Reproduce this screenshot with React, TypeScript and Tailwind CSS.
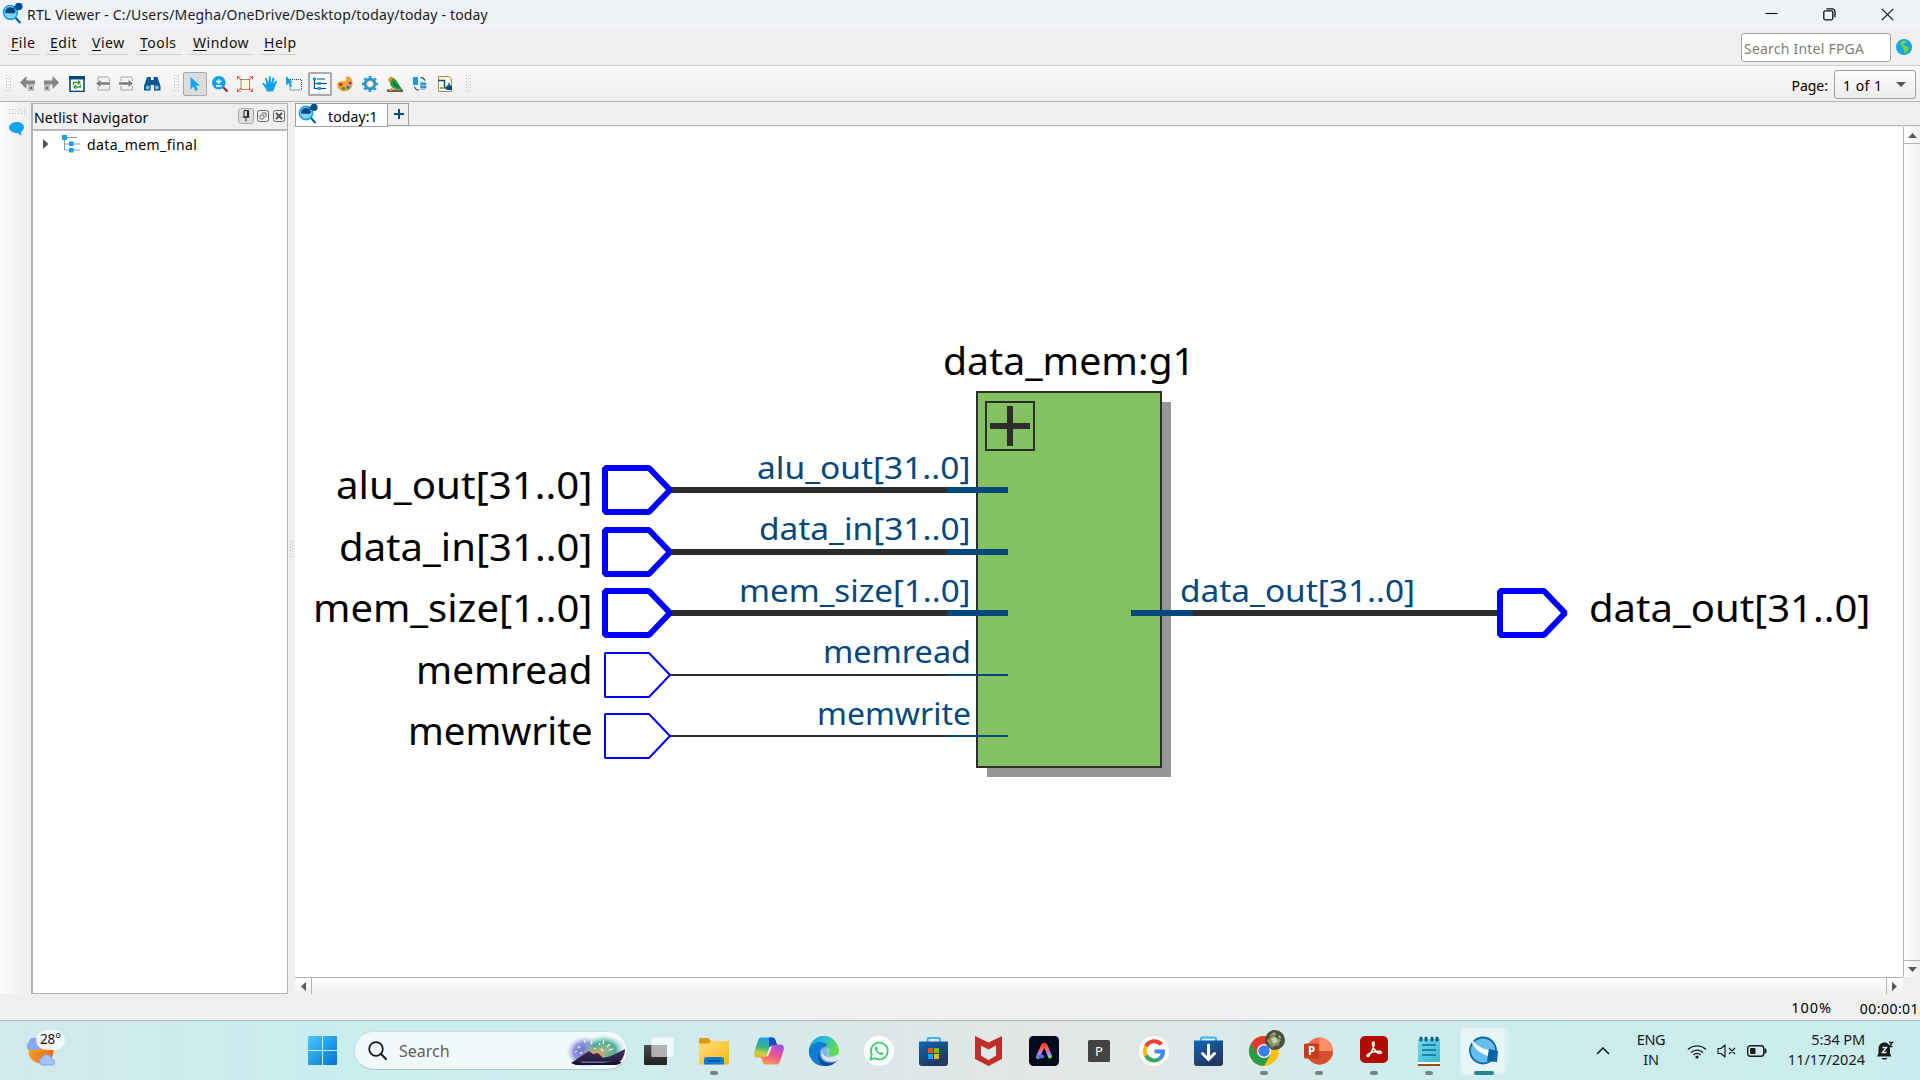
import React from "react";

type IconProps = { children: React.ReactNode; w?: number; h?: number; vb?: string; className?: string };

function Svg({ children, w = 16, h = 16, vb, className = "" }: IconProps) {
  return (
    <svg width={w} height={h} viewBox={vb ?? `0 0 ${w} ${h}`} fill="none" className={`block shrink-0 ${className}`}>
      {children}
    </svg>
  );
}

function ViewerLogo({ size = 20 }: { size?: number }) {
  return (
    <Svg w={size} h={size} vb="0 0 20 20">
      <path d="M12.5 13.5L17 18.5" stroke="#0b5a94" strokeWidth="2" strokeLinecap="round" />
      <circle cx="8" cy="9" r="6.600" fill="#7fd3f7" stroke="#1ba1e2" strokeWidth="1.600" />
      <path d="M3 9.500a5 5 0 0 1 10-1l-1.500 1.500z" fill="#04457f" />
      <circle cx="16" cy="3.300" r="3.600" fill="#04508f" />
      <path d="M11 3h4v2l-3 1z" fill="#04508f" />
    </Svg>
  );
}

function Grip({ vertical = false }: { vertical?: boolean }) {
  return vertical ? (
    <Svg w={17} h={5}>
      <path d="M0 .5h17M0 4.500h17" stroke="#b4b4b4" strokeDasharray="1 2" />
      <path d="M1 2.500h17" stroke="#d4d4d4" strokeDasharray="1 2" />
    </Svg>
  ) : (
    <Svg w={5} h={17}>
      <path d="M.5 0v17M4.500 0v17" stroke="#b4b4b4" strokeDasharray="1 2" />
      <path d="M2.500 1v17" stroke="#d4d4d4" strokeDasharray="1 2" />
    </Svg>
  );
}

const menus: [string, string, string][] = [
  ["F", "ile", "w-[32px]"],
  ["E", "dit", "w-[35px]"],
  ["V", "iew", "w-[41px]"],
  ["T", "ools", "w-[46px]"],
  ["W", "indow", "w-[64px]"],
  ["H", "elp", "w-[36px]"],
];

function TitleBar() {
  return (
    <header className="flex h-[29px] shrink-0 items-start bg-[#eff3f7]">
      <div className="ml-[2px] mt-[3px]"><ViewerLogo size={21} /></div>
      <span className="ml-[4px] mt-[5px] text-[14px] leading-[19px] tracking-[0.168px] text-[#1b1b1b]">
        RTL Viewer - C:/Users/Megha/OneDrive/Desktop/today/today - today
      </span>
      <div className="ml-auto mt-[8px] mr-[26px] flex gap-[45px]">
        <Svg w={13} h={13}><path d="M0.500 5.500h12" stroke="#111" strokeWidth="1.100" /></Svg>
        <Svg w={13} h={13}>
          <rect x=".8" y="2.800" width="9" height="9" rx="1.500" stroke="#111" strokeWidth="1.300" />
          <path d="M3.500 .8h5.500a3 3 0 0 1 3 3v5.500" stroke="#111" strokeWidth="1.300" />
        </Svg>
        <Svg w={13} h={13}><path d="M.8.8l11.400 11.400M12.200.8L.8 12.200" stroke="#111" strokeWidth="1.200" /></Svg>
      </div>
    </header>
  );
}

function MenuBar() {
  return (
    <nav className="flex h-[37px] shrink-0 items-start border-b border-[#d2d2d2] bg-[#efefef] pl-[7px]">
      <div className="flex gap-[7px]">
        {menus.map(([k, rest, w]) => (
          <div key={k} className={`h-[26px] whitespace-nowrap border-b border-[#d0d0d0] pl-[4px] pt-[4px] text-[14px] leading-[20px] tracking-[0.500px] text-[#111] ${w}`}>
            <span className="underline decoration-1 underline-offset-2">{k}</span>{rest}
          </div>
        ))}
      </div>
      <div className="ml-auto mt-[4px] flex h-[29px] w-[150px] items-center rounded-[3px] border border-[#a4a4a4] bg-white pl-[2px] pt-px text-[14px] tracking-[0.220px] text-[#7c7c7c]">
        Search Intel FPGA
      </div>
      <Svg w={16} h={16} className="ml-[5px] mr-[8px] mt-[10px]">
        <circle cx="8" cy="8" r="8" fill="#10a5ee" />
        <path d="M4 4.500Q5 1.500 9.500 1.500L11 3 8 4.500 7 6.500 9.500 7l3.500 1.500L12 11.500 9.500 14.500 8.500 15l-.5-4.500L6.500 8.500 5 6z" fill="#7ed02f" />
      </Svg>
    </nav>
  );
}

const arrowLeft = "M0 6.500L6.500 0v4.500H15v4H6.500V13z";

function ToolBar() {
  return (
    <div className="flex h-[36px] shrink-0 items-center border-b border-[#b4b4b4] bg-gradient-to-b from-[#fafafa] to-[#eeeeee]">
      <div className="ml-[6px]"><Grip /></div>
      <Svg w={16} h={16} className="ml-[9px]">
        <path d={arrowLeft} fill="#858585" />
        <path d="M8 8h6v7H8z" fill="#b9b9b9" /><path d="M10 11h2v2h-2z" fill="#666" />
      </Svg>
      <Svg w={16} h={16} className="ml-[7px]">
        <path d={arrowLeft} fill="#858585" transform="matrix(-1 0 0 1 16 0)" />
        <path d="M1 8h6v7H1z" fill="#b9b9b9" /><path d="M3 11h2v2H3z" fill="#666" />
      </Svg>
      <Svg w={16} h={16} className="ml-[10px]">
        <rect x="1" y="1" width="14" height="14.500" fill="#fff" stroke="#04487c" strokeWidth="1.600" />
        <path d="M0 0h16v3.500H0z" fill="#04487c" />
        <path d="M4.500 9V6.500H11M9 4.500l2 2-2 2M11.500 8.500V11H5M7 9l-2 2 2 2" stroke="#3f9a3a" strokeWidth="1.300" />
      </Svg>
      <Svg w={16} h={16} className="ml-[11px]">
        <path d="M2 5V1h10l1.500 1.500V5M2 10v4h11.500v-4" stroke="#a4a4a4" />
        <path d="M0 7.500L4.500 4v2.200H14v2.500H4.500V11z" fill="#7c7c7c" />
      </Svg>
      <Svg w={16} h={16} className="ml-[7px]">
        <path d="M2 5V1h10l1.500 1.500V5M2 10v4h11.500v-4" stroke="#a4a4a4" />
        <path d="M14 7.500L9.500 4v2.200H0v2.500h9.500V11z" fill="#7c7c7c" />
      </Svg>
      <Svg w={17} h={16} className="ml-[9px]">
        <path d="M3 1h4v3h2.500V1h4l3 9v4.500H10V9H6.500v5.500H0V10z" fill="#075b94" />
        <circle cx="3.700" cy="11.500" r="2.500" fill="#6ec1ea" stroke="#075b94" /><circle cx="12.800" cy="11.500" r="2.500" fill="#6ec1ea" stroke="#075b94" />
      </Svg>
      <div className="ml-[13px]"><Grip /></div>
      <div className="ml-[4px] flex h-[24px] w-[24px] items-center justify-center rounded-[2px] border border-[#a8a8a8] bg-[#dcdcdc]">
        <Svg w={12} h={16}><path d="M1.500 1v12.500l3-3 2 4.500 2.500-1-2-4.500H11z" fill="#0ea5f2" /></Svg>
      </div>
      <Svg w={17} h={16} className="ml-[5px]">
        <path d="M11 11l4.500 4.500" stroke="#b01e1e" strokeWidth="2.200" />
        <circle cx="6.800" cy="6.800" r="6.800" fill="#109fe8" />
        <path d="M4 5.500h5.500M6.800 3v5M4 10h5.500" stroke="#fff" strokeWidth="1.300" />
      </Svg>
      <Svg w={16} h={16} className="ml-[8px]">
        <rect x="4" y="3.500" width="8.500" height="10" fill="#fdf6dc" stroke="#a08b6a" />
        <path d="M0 4V0h4M12 0h4v4M16 12v4h-4M4 16H0v-4" stroke="#ee2c2c" strokeWidth="1.200" /><path d="M0 0l4 4M16 0l-4 4M16 16l-4-4M0 16l4-4" stroke="#ee2c2c" />
      </Svg>
      <Svg w={16} h={16} className="ml-[9px]">
        <path d="M5 15.500L3.500 12 0 7.500l1.300-.8L4.500 9 3 2l1.500-.3L6.300 7 7 .3h1.500L9 7l1.800-5.700 1.500.4L11.500 8l2.500-3.500 1.300.8-2.800 6.700-1.500 3.500z" fill="#12a2ea" />
      </Svg>
      <Svg w={17} h={16} className="ml-[8px]">
        <path d="M4 3.500h11.500v10.500H4z" stroke="#04487c" strokeDasharray="1 1" />
        <path d="M0 0v9.500l2.500-2.200L4 11l2-.8-1.500-3.700H7z" fill="#12a2ea" />
      </Svg>
      <div className="ml-[5px] flex h-[24px] w-[24px] items-center justify-center rounded-[2px] border-2 border-[#ababab] bg-[#f5f5f5]">
        <Svg w={16} h={16}>
          <path d="M0 0h16v16H0z" fill="#fff" />
          <path d="M2.500 3v9.500H6M2.500 7.500H6M5 3h8M9 7.500h6M9 12.500h5" stroke="#04487c" strokeWidth="1.200" />
          <path d="M1 1.500h3v3H1zM5.500 6h3.500v3H5.500zM5.500 11h3.500v3H5.500z" fill="#12a2ea" />
        </Svg>
      </div>
      <Svg w={16} h={16} className="ml-[5px]">
        <path d="M11.500.5c3 1 4.500 4.500 4 8-.6 4-4 6.800-8 6.800C3 15.300 0 12 .2 9 .5 6 3 4.600 6 5.500 8.500 6 9 4.500 9 2.500 9 1 10 0 11.500.5z" fill="#f5a52a" />
        <circle cx="3.700" cy="8.600" r="1.800" fill="#d82840" /><circle cx="6.500" cy="12.500" r="1.700" fill="#3a9b3a" /><circle cx="11" cy="11.500" r="1.800" fill="#168bd8" /><circle cx="13" cy="7" r="1.500" fill="#7b3bb4" />
      </Svg>
      <Svg w={16} h={16} className="ml-[9px]">
        <circle cx="8" cy="8" r="4.700" stroke="#1698dd" strokeWidth="3" fill="#f4f4f4" />
        <circle cx="8" cy="8" r="7" stroke="#1698dd" strokeWidth="2" strokeDasharray="2.750 2.750" strokeDashoffset="1.400" />
        <circle cx="8" cy="8" r="3.500" stroke="#b5a36d" />
      </Svg>
      <Svg w={16} h={16} className="ml-[9px]">
        <path d="M0 13.500h16V16H0z" fill="#7a5548" />
        <path d="M1 3.500L3.500.5 7 2l1 3-4 4z" fill="#ef8c22" />
        <path d="M6 2c4 2 5 5 9.500 12l-6-1C5 12.500 3 10 3.500 6z" fill="#1f9e3d" /><path d="M6 5l7 7-6-2z" fill="#0d6d2c" />
        <path d="M4 12l-1 3h2l1-3z" fill="#e8a13a" />
      </Svg>
      <Svg w={16} h={16} className="ml-[9px]">
        <path d="M1 1h5v8H1z" fill="#109fe8" /><path d="M8 5.500h6v8.500H8z" fill="#8fd0f2" />
        <path d="M8.500 1.500c2.500 0 3.500 1 4.500 3M2.500 10.500c.5 2.500 2 3.500 4.500 3.500M8.500 8h6M8.500 11h6" stroke="#04487c" strokeWidth="1.100" />
      </Svg>
      <Svg w={16} h={16} className="ml-[9px]">
        <path d="M1.500.5h10.500l2.500 2.500v12.500h-13z" fill="#fdf6dc" stroke="#a08b6a" />
        <path d="M1 4.500h6.500v7.500H11M12 7v5" stroke="#04487c" strokeWidth="1.400" /><path d="M9.500 9.500h5.500V14H9.500z" fill="#04487c" /><path d="M3 12h3" stroke="#04487c" />
      </Svg>
      <div className="ml-[13px]"><Grip /></div>
      <span className="ml-auto mt-[4px] text-[14px] leading-[20px] text-black">Page:</span>
      <div className="ml-[6px] mr-[4px] mt-px flex h-[29px] w-[82px] items-center justify-between rounded-[3px] border border-[#a0a0a0] bg-gradient-to-b from-[#fdfdfd] to-[#ececec] pl-[8px] pr-[9px] text-[14px] text-black">
        <span className="mt-[2px] tracking-[0.500px]">1 of 1</span>
        <Svg w={10} h={5}><path d="M0 0h10L5 5z" fill="#585858" /></Svg>
      </div>
    </div>
  );
}

function Navigator() {
  return (
    <aside className="mt-px flex h-[891px] w-[257px] shrink-0 flex-col border border-l-2 border-[#b2b2b2] bg-white">
      <div className="flex h-[27px] shrink-0 items-center border-b-2 border-[#b8b8b8] bg-[#efefef] pl-[1px]">
        <span className="mt-[2px] text-[14px] tracking-[0.200px] text-black">Netlist Navigator</span>
        <div className="mb-px ml-auto mr-[2px] flex items-center gap-[3px]">
          <div className="flex h-[16px] w-[16px] items-center justify-center rounded-[3px] border border-[#ababab] bg-[#dedede]">
            <Svg w={8} h={12}><path d="M2 .5h4.500V7H2zM.5 7h7M4 7v4.500M5.500 1v6" stroke="#222" /></Svg>
          </div>
          <Svg w={12} h={12}>
            <rect x=".5" y=".5" width="11" height="11" rx="2" stroke="#666" />
            <circle cx="5" cy="7" r="2.200" stroke="#666" /><path d="M5 3h4v4" stroke="#666" />
          </Svg>
          <Svg w={12} h={12} className="ml-px">
            <rect x=".5" y=".5" width="11" height="11" rx="2" stroke="#666" />
            <path d="M3 3l6 6M9 3L3 9" stroke="#555" strokeWidth="2" />
          </Svg>
        </div>
      </div>
      <div className="flex h-[26px] items-center pl-[10px]">
        <Svg w={6} h={10}><path d="M0 0l5.500 5L0 10z" fill="#555" /></Svg>
        <Svg w={19} h={18} className="ml-[13px]">
          <path d="M2.500 4v11H7M2.500 9H7M5 2.500h10M10 9h8M10 15h8" stroke="#7f9db5" />
          <path d="M0 0h5v5H0zM7 6.500h4.500V11H7zM7 13h4.500v4.500H7z" fill="#12a2ea" />
        </Svg>
        <span className="ml-[6px] text-[14px] tracking-[0.420px] text-black">data_mem_final</span>
      </div>
    </aside>
  );
}

const inputs = [
  { name: "alu_out[31..0]", y: 490, bus: true, x: 336, px: 757, end: 970.5, base: 478.5 },
  { name: "data_in[31..0]", y: 552, bus: true, x: 339, px: 759, end: 970.5, base: 539.5 },
  { name: "mem_size[1..0]", y: 613, bus: true, x: 313, px: 739, end: 970.5, base: 601.5 },
  { name: "memread", y: 675, bus: false, x: 416, px: 823, end: 971, base: 662.5 },
  { name: "memwrite", y: 736, bus: false, x: 408, px: 817, end: 971, base: 724.5 },
];

function PinShape({ x, y, bus }: { x: number; y: number; bus: boolean }) {
  return (
    <path
      d={`M${x} ${y - 22}h44l21 22l-21 22h-44z`}
      fill="#fff"
      stroke="#0000ff"
      strokeWidth={bus ? 6 : 2}
      strokeLinejoin="bevel"
    />
  );
}

function Label({ x, end, y, size, fill = "#000", children }: { x: number; end: number; y: number; size: number; fill?: string; children: string }) {
  return (
    <text x={x} y={y} fontSize={size} fill={fill} textLength={end - x} lengthAdjust="spacingAndGlyphs">
      {children}
    </text>
  );
}

function Schematic() {
  return (
    <svg width="1608" height="850" viewBox="295 127 1608 850" className="block shrink-0 bg-white" fontFamily='"Noto Sans", sans-serif'>
      <rect x="987" y="402" width="184" height="375" fill="#969696" />
      <rect x="977" y="392" width="184" height="375" fill="#84c161" stroke="#2d2d2d" strokeWidth="2" />
      <rect x="986" y="402" width="48" height="48" stroke="#2d2d2d" strokeWidth="2" fill="none" />
      <path d="M990 426h40M1010 406v40" stroke="#2d2d2d" strokeWidth="6" />
      {inputs.map((p) => (
        <g key={p.name}>
          <path d={`M668 ${p.y}H948`} stroke="#2d2d2d" strokeWidth={p.bus ? 6 : 2} />
          <path d={`M947 ${p.y}H1008`} stroke="#04487c" strokeWidth={p.bus ? 6 : 2} />
          <PinShape x={605} y={p.y} bus={p.bus} />
          <Label x={p.x} end={592.5} y={p.y + 9} size={38}>{p.name}</Label>
          <Label x={p.px} end={p.end} y={p.base} size={30} fill="#04487c">{p.name}</Label>
        </g>
      ))}
      <path d="M1193 613h306" stroke="#2d2d2d" strokeWidth="6" />
      <path d="M1131 613h62" stroke="#04487c" strokeWidth="6" />
      <PinShape x={1500} y={613} bus />
      <Label x={943} end={1195} y={375} size={38}>data_mem:g1</Label>
      <Label x={1180} end={1415} y={601.500} size={30} fill="#04487c">data_out[31..0]</Label>
      <Label x={1589} end={1870.5} y={622} size={38}>data_out[31..0]</Label>
    </svg>
  );
}

function Workspace() {
  return (
    <main className="flex min-w-0 flex-1 flex-col">
      <div className="mt-px flex h-[24px] shrink-0">
        <div className="flex h-[24px] w-[93px] items-start border border-[#a0a0a0] bg-white pl-[2px]">
          <ViewerLogo size={20} />
          <span className="ml-[10px] mt-[3px] text-[14px] leading-[20px] tracking-[0.100px] text-black">today:1</span>
        </div>
        <div className="flex h-[23px] w-[21px] items-start justify-center border border-l-0 border-[#a0a0a0] bg-[#efefef] pl-px pt-[5px]">
          <Svg w={10} h={10}><path d="M0 5h10M5 0v10" stroke="#04487c" strokeWidth="2" /></Svg>
        </div>
        <div className="h-[23px] flex-1 border-b border-[#b4b4b4]" />
      </div>
      <div className="flex h-[850px] shrink-0 bg-white">
        <Schematic />
        <div className="flex w-[17px] shrink-0 flex-col justify-between border-l border-[#b4b4b4] bg-gradient-to-r from-white to-[#efefef]">
          <div className="flex h-[17px] items-center justify-center border-b border-[#b4b4b4]">
            <Svg w={9} h={5}><path d="M0 5h9L4.500 0z" fill="#585858" /></Svg>
          </div>
          <div className="flex h-[17px] items-center justify-center border-t border-[#b4b4b4]">
            <Svg w={9} h={5}><path d="M0 0h9L4.500 5z" fill="#585858" /></Svg>
          </div>
        </div>
      </div>
      <div className="flex h-[17px] w-[1608px] shrink-0 justify-between border-t border-[#b4b4b4] bg-gradient-to-b from-white to-[#efefef]">
        <div className="flex w-[17px] items-center justify-center border-r border-[#b4b4b4]">
          <Svg w={5} h={9}><path d="M5 0v9L0 4.500z" fill="#585858" /></Svg>
        </div>
        <div className="flex w-[17px] items-center justify-center border-l border-[#b4b4b4] pr-px">
          <Svg w={5} h={9}><path d="M0 0v9l5-4.500z" fill="#585858" /></Svg>
        </div>
      </div>
    </main>
  );
}

const apps: { id: string; running?: boolean; art: React.ReactNode }[] = [
  { id: "task-view", art: (<><rect x="0" y="9" width="23" height="20" rx="1" fill="url(#tv)" /><rect x="7.500" y="1.500" width="22" height="19.500" rx="1" fill="#fff" fillOpacity=".7" /><rect x="7.500" y="9" width="15.500" height="12" fill="#aaa" fillOpacity=".7" /><defs><linearGradient id="tv" x2="0" y2="1"><stop stopColor="#4a4a4a" /><stop offset="1" stopColor="#222" /></linearGradient></defs></>) },
  { id: "files", running: true, art: (<><path d="M0 3.500C0 2.500.7 2 1.500 2H9l3 3h17c.8 0 1 .5 1 1v5H0z" fill="#dd9a0a" /><path d="M0 7.500h10l2.500-2.500H29c.6 0 1 .4 1 1v22.500H0z" fill="url(#fo)" /><path d="M5 28.500V24c0-1.800 1-3 3-3h14c2 0 3 1.200 3 3v4.500z" fill="#0f79d0" /><path d="M9 25h12" stroke="#0a4d94" strokeWidth="1.500" /><defs><linearGradient id="fo" x2="1" y2="1"><stop stopColor="#ffdf75" /><stop offset="1" stopColor="#fcb61e" /></linearGradient></defs></>) },
  { id: "copilot", art: (<><path d="M7.500 1.500H18c2 0 3 1 3.600 3L23 9h-4c-2 0-3 1-3.600 3l-2 7c-.6 2-2 2.500-3.500 2.500H3.500C.8 21.500-.4 19 .3 16L4 4.500C4.700 2.500 5.500 1.500 7.500 1.500z" fill="url(#c1)" /><path d="M22.500 28.500H12c-2 0-3-1-3.600-3L7 21h4c2 0 3-1 3.600-3l2-7c.6-2 2-2.500 3.500-2.500h6.400c2.700 0 3.900 2.500 3.200 5.500L26 25.500c-.7 2-1.500 3-3.500 3z" fill="url(#c2)" /><path d="M15 1.500h3c2 0 3 1 3.600 3L23 9h-4c-2.500 0-3.200 1.500-4 4z" fill="#1748c7" /><path d="M18 11l-4 9h-1.500l3-9z" fill="#eef0f0" /><defs><linearGradient id="c1" x1=".5" x2=".3" y2="1"><stop stopColor="#1a9fe8" /><stop offset=".5" stopColor="#38b585" /><stop offset=".8" stopColor="#c9d33a" /><stop offset="1" stopColor="#f7a72a" /></linearGradient><linearGradient id="c2" x1=".7" x2=".3" y2="1"><stop stopColor="#a44ee8" /><stop offset=".5" stopColor="#ee5590" /><stop offset="1" stopColor="#fb9a52" /></linearGradient></defs></>) },
  { id: "edge", art: (<><circle cx="15" cy="15" r="15" fill="url(#e1)" /><path d="M0 14c1-6 6-8.500 11-8.500 6 0 10 3.500 10 7-3-2.500-9-2-10.500 3-1.500 6 3 12 9 12.500-3 2-6 2-8 1.500C4 28-.5 21 0 14z" fill="#0d7fd2" /><path d="M11 14c-2 6 2 13 11 12.500 3 0 5-1 6.500-2.500C25 29 20 30.500 15 30 9 28 8 19 11 14z" fill="#124f9c" /><path d="M15.500 12c-3 2-2.500 6 .5 8 4 2.500 9 2 13-.5l1.500 2-3 2.500c-5 2.500-11 1.500-14-2.500-2-3.500-1-8 2-9.500z" fill="#dfe9ea" /><path d="M16 12c2.500-1.500 5 0 5 2.500 0 2-1.500 2.500-1 4 1.500 2 7 1.500 9-.5 1.500-3 1-6-.5-9L20 6z" fill="#52d45d" /><path d="M1 12C5 4 16 5 20 10c2 3 1 5 0 6 1 3 7 2.500 9.500-.5C30 8 24 0 15 0 8 0 2 5 1 12z" fill="url(#e2)" /><defs><linearGradient id="e1" x2="1"><stop stopColor="#0d7fd2" /><stop offset="1" stopColor="#dfe9ea" /></linearGradient><linearGradient id="e2" x2="1" y2=".5"><stop stopColor="#1597d8" /><stop offset=".5" stopColor="#2cbfd0" /><stop offset="1" stopColor="#66dc4e" /></linearGradient></defs></>) },
  { id: "whatsapp", art: (<><circle cx="15" cy="15" r="15" fill="#fff" /><path d="M6.500 23.500l1.300-4.800A8.400 8.400 0 1 1 11 22.200z" stroke="#2fd068" strokeWidth="1.700" /><path d="M12.300 10.300c-.9 0-1.600 1-1.500 2 .2 3.200 3.700 6.500 6.800 6.700 1.200 0 2-.9 2-1.700l-2.200-1.400-1.200 1.200c-1.300-.4-2.700-1.700-3.200-3l1-1z" fill="#2fd068" /></>) },
  { id: "store", art: (<><path d="M8.500 7V3.500C8.500 2.500 9 2 10 2h9.500c1 0 1.500.5 1.500 1.500V7" stroke="#30b8f5" strokeWidth="2" /><path d="M0 5.500h29V27c0 2-1 3-3 3H3c-2 0-3-1-3-3z" fill="url(#st)" /><path d="M9 12h5v5H9z" fill="#f2511b" /><path d="M15 12h5v5h-5z" fill="#80bb0a" /><path d="M9 18h5v5H9z" fill="#05a4ee" /><path d="M15 18h5v5h-5z" fill="#fcb80a" /><defs><linearGradient id="st" x2=".5" y2="1"><stop stopColor="#0b66b5" /><stop offset="1" stopColor="#25365f" /></linearGradient></defs></>) },
  { id: "mcafee", art: (<path d="M1 0l13.500 6.500L28 0v23l-13.500 7L1 23zM7 9.500v10.300l7.500 4.200 7.500-4.200V9.500l-7.500 4z" fill="#c12d2d" fillRule="evenodd" />) },
  { id: "adobe", art: (<><rect width="30" height="30" rx="4.500" fill="#020a1c" /><path d="M9 21l5-11.500c.5-1 2-1 2.500 0L21 20.500" stroke="url(#ad)" strokeWidth="4" strokeLinecap="round" /><path d="M9.500 20.500h4" stroke="#5a6cff" strokeWidth="3.500" strokeLinecap="round" /><defs><linearGradient id="ad" x2="0" y2="1"><stop stopColor="#ff3b30" /><stop offset=".3" stopColor="#ff6a3a" /><stop offset=".5" stopColor="#e85ad8" /><stop offset=".75" stopColor="#b08cf0" /><stop offset="1" stopColor="#6de05a" /></linearGradient></defs></>) },
  { id: "p", art: (<><rect x="4" y="4" width="22" height="22" rx="1.500" fill="#444" /><text x="15" y="20" textAnchor="middle" fontSize="13" fill="#fff">P</text></>) },
  { id: "google", art: (<><circle cx="15" cy="15" r="15" fill="#fff" /><path d="M22.500 8.500A9.300 9.300 0 0 0 7 10.500" stroke="#ea4335" strokeWidth="4" /><path d="M7 10.500a9.300 9.300 0 0 0 0 9" stroke="#fbbc05" strokeWidth="4" /><path d="M7 19.500a9.300 9.300 0 0 0 14 3" stroke="#34a853" strokeWidth="4" /><path d="M15.500 15.500h8.500c0 3-1 5.300-3 7" stroke="#4285f4" strokeWidth="4" /></>) },
  { id: "downloads", art: (<><path d="M7 6V3c0-1 .5-1.500 1.500-1.500h12C21.500 1.500 22 2 22 3v3" stroke="#30b8f5" strokeWidth="2" /><path d="M0 4.500h29V27c0 2-1 3-3 3H3c-2 0-3-1-3-3z" fill="url(#dl)" /><path d="M14.500 9v14M8.500 17.500l6 6 6-6" stroke="#fff" strokeWidth="3" strokeLinecap="round" /><defs><linearGradient id="dl" x2=".5" y2="1"><stop stopColor="#0b68b7" /><stop offset="1" stopColor="#25365f" /></linearGradient></defs></>) },
  { id: "chrome", running: true, art: (<><circle cx="15" cy="15" r="15" fill="#fbc116" /><path d="M15 15L28 7.500A15 15 0 0 0 2 7.500L8.500 18.500z" fill="#e23b2e" /><path d="M2 7.500A15 15 0 0 0 15 30l6.500-11.500L15 15l-6 4z" fill="#2b9a47" /><circle cx="15" cy="15" r="7" fill="#fff" /><circle cx="15" cy="15" r="5.700" fill="#3a7de8" /><circle cx="26" cy="4" r="10" fill="#48503f" /><path d="M18 5c3-5 6-6 9-4l5 3-3 5-6 2z" fill="#8f9a5a" /><path d="M20 0l5-4 3 3z" fill="#9aa564" /><path d="M22 3l4-2 3 4-4 3zM29-1l3 2-1 2z" fill="#c9d3b4" /><path d="M19 8l4 1 1 3-3-1zM28 9l4-2-3 4z" fill="#6273a8" /></>) },
  { id: "powerpoint", running: true, art: (<><circle cx="15.500" cy="15" r="13.500" fill="#ee6b4c" /><path d="M15.500 1.500A13.500 13.500 0 0 1 29 15H15.500z" fill="#ff9068" /><path d="M29 15a13.500 13.500 0 0 1-26 5l12.500-5z" fill="#d5502f" /><rect x="0" y="7.500" width="15" height="15" rx="1.500" fill="#c23e1c" /><text x="7.500" y="19" textAnchor="middle" fontSize="11.500" fontWeight="700" fill="#fff">P</text></>) },
  { id: "acrobat", running: true, art: (<><rect x="1" y="0" width="28" height="27" rx="5" fill="#b30b00" /><path d="M14.500 6c-1.500 0-1.300 2.500-.5 4.500 1 3 4 7 7 7 2 0 2-2-.5-2.200-4-.3-9 1.200-11.500 3-2 1.500-.5 3.200 1 1.500 2-2.300 4-7 4.800-10 .4-1.800.7-3.800-.3-3.800z" stroke="#fff" strokeWidth="1.500" /></>) },
  { id: "notepad", running: true, art: (<><path d="M4 26h22v4H4z" fill="#a34c12" /><path d="M4 26h22v2H4z" fill="#fff" /><path d="M4 3h22v23H4z" fill="url(#np)" /><path d="M7 2v2M12 2v2M18 2v2M23 2v2" stroke="#0f5b78" strokeWidth="3" strokeLinecap="round" /><path d="M8 9h14M8 14h14M8 19h14" stroke="#0f6f8c" strokeWidth="1.500" /><defs><linearGradient id="np" x2="1" y2="1"><stop stopColor="#6fdcf0" /><stop offset="1" stopColor="#3fb3d0" /></linearGradient></defs></>) },
];

function Highlight() {
  return (
    <Svg w={60} h={32} className="ml-auto">
      <defs>
        <radialGradient id="g1"><stop stopColor="#5f6fd0" /><stop offset=".6" stopColor="#8f93e0" /><stop offset="1" stopColor="#cfd4f5" stopOpacity="0" /></radialGradient>
        <radialGradient id="g2"><stop stopColor="#9fb88a" /><stop offset=".55" stopColor="#4aae98" /><stop offset="1" stopColor="#9fd9cf" stopOpacity="0" /></radialGradient>
        <radialGradient id="g3"><stop stopColor="#f79a55" /><stop offset="1" stopColor="#f7b27a" stopOpacity="0" /></radialGradient>
        <linearGradient id="hill" x2="0" y2="1"><stop stopColor="#4a3160" /><stop offset="1" stopColor="#1a1638" /></linearGradient>
      </defs>
      <ellipse cx="18" cy="17" rx="19" ry="16" fill="url(#g1)" />
      <ellipse cx="37" cy="15" rx="21" ry="15" fill="url(#g2)" />
      <ellipse cx="28" cy="19" rx="15" ry="8" fill="url(#g3)" />
      <path d="M4 28L22 16l4 3 5-1 5 5 8-2 14-7c0 8-5 15-11 16H9z" fill="url(#hill)" />
      <path d="M5 27h50c-2 2-4 3-7 3H9z" fill="#15122e" />
      <path d="M12 26.500h34l-10 1.500H16z" fill="#6a6f98" />
      <path d="M8 17l2-1M11 11l2 2M18 5v3M25 6l-1 3M15 17l-2 2M32 8l1 2M37 5l-1 4M43 9l-3 3M46 14l-4 1M34 14l2 2M27 13l2 1" stroke="#fff3d8" strokeWidth="1.300" />
    </Svg>
  );
}

function TaskBar() {
  return (
    <footer className="flex h-[60px] shrink-0 items-center border-t border-[#aab4b6] bg-[linear-gradient(90deg,#d2e9ed_0%,#c9edee_16%,#cdecee_33%,#d9e9e9_42%,#e3e6e5_55%,#dfe8e8_61%,#ceeced_72%,#c9edee_100%)] text-[#1b1b1b]">
      <div className="relative ml-[26px] h-[34px] w-[42px]">
        <Svg w={42} h={34}>
          <circle cx="15" cy="17" r="12.500" fill="url(#sun)" />
          <path d="M3 16a4 4 0 0 1-.5-7A5.500 5.500 0 0 1 13 7l1 9z" fill="#86aaf0" />
          <path d="M16 31a4 4 0 0 1 0-7.500 5 5 0 0 1 9.500 1.500c4 .5 4.500 6 .5 6z" fill="#a3c3fa" stroke="#7ea3ea" />
          <defs><linearGradient id="sun" x2="1" y2=".6"><stop stopColor="#f5b02d" /><stop offset="1" stopColor="#ee6a14" /></linearGradient></defs>
        </Svg>
        <span className="absolute left-[10px] top-[-4px] flex h-[20px] w-[29px] items-center justify-center rounded-full bg-[#f4fafa]/90 text-[13.500px]">28°</span>
      </div>
      <Svg w={29} h={29} className="ml-[240px]">
        <path d="M0 1.500C0 .5.500 0 1.500 0H14v14H0zM15 0h12.500c1 0 1.500.5 1.500 1.500V14H15zM0 15h14v14H1.500C.5 29 0 28.500 0 27.500zM15 15h14v12.500c0 1-.5 1.500-1.500 1.500H15z" fill="url(#win)" />
        <defs><linearGradient id="win" x2="1" y2="1"><stop stopColor="#4cc8fa" /><stop offset="1" stopColor="#0272d2" /></linearGradient></defs>
      </Svg>
      <div className="ml-[17px] flex h-[39px] w-[274px] items-center rounded-full border border-b-[#a8c8ca] border-[#cfe0e2] bg-[#f1f9fa] pl-[13px]">
        <Svg w={19} h={19}><circle cx="8" cy="8" r="6.800" stroke="#1b1b1b" strokeWidth="1.800" /><path d="M13 13l5 5" stroke="#1b1b1b" strokeWidth="2.200" strokeLinecap="round" /></Svg>
        <span className="ml-[12px] text-[16px] text-[#5c5f60]">Search</span>
        <Highlight />
      </div>
      <div className="ml-[16px] flex gap-[25px]">
        {apps.map((a) => (
          <div key={a.id} className="relative w-[30px]">
            <Svg w={30} h={30} className="overflow-visible">{a.art}</Svg>
            {a.running && <span className="absolute left-[11px] top-[35px] h-[4px] w-[8px] rounded-full bg-[#758586]" />}
          </div>
        ))}
      </div>
      <div className="h-[48px] w-[48px] ml-[16px] rounded-[5px] border border-[#d8eef0] bg-[#dcf2f4]">
        <div className="relative flex h-full w-[43px] items-center justify-center rounded-[5px] bg-[#e8f6f8] pl-[2px]">
          <Svg w={30} h={30}>
            <circle cx="14" cy="14.500" r="13" fill="#66bdf0" stroke="#0c68a8" strokeWidth="1.800" />
            <path d="M2 2c1 8 6 14 17 18l1-6C11 12 6 8 2 2z" fill="#f4fbff" />
            <path d="M20 13l9 2-1 11-10-1z" fill="#0564a3" />
          </Svg>
          <span className="absolute bottom-[-1px] left-[13px] h-[4px] w-[20px] rounded-full bg-[#25848f]" />
        </div>
      </div>
      <div className="ml-auto flex items-center">
        <Svg w={14} h={8}><path d="M1 7l6-6 6 6" stroke="#1b1b1b" strokeWidth="1.600" /></Svg>
        <div className="mb-[3px] ml-[25px] w-[32px] text-center text-[14.500px] leading-[20px] tracking-[-0.300px]"><div>ENG</div><div>IN</div></div>
        <Svg w={20} h={16} className="ml-[20px]">
          <path d="M1 6.500a13 13 0 0 1 18 0M4 9.500a8.700 8.700 0 0 1 12 0M6.500 12a5 5 0 0 1 7 0" stroke="#1b1b1b" strokeWidth="1.400" /><circle cx="10" cy="14" r="1.600" fill="#1b1b1b" />
        </Svg>
        <Svg w={20} h={14} className="ml-[10px]">
          <path d="M1 4.500h3L8 1v12L4 9.500H1zM12 4l6 6M18 4l-6 6" stroke="#1b1b1b" strokeWidth="1.200" strokeLinejoin="round" />
        </Svg>
        <Svg w={20} h={12} className="ml-[10px]">
          <rect x=".7" y=".7" width="16" height="10.600" rx="2.500" stroke="#1b1b1b" strokeWidth="1.400" /><rect x="3" y="3" width="5.500" height="6" rx="1" fill="#1b1b1b" /><path d="M18 3.500c1.500.5 1.500 4.500 0 5z" fill="#1b1b1b" stroke="#1b1b1b" />
        </Svg>
        <div className="mb-[3px] ml-[18px] w-[80px] text-right text-[14.500px] leading-[20px]"><div className="tracking-[-0.100px]">5:34 PM</div><div>11/17/2024</div></div>
        <Svg w={18} h={20} className="ml-[11px] mr-[26px]">
          <path d="M1 15.500l1.500-3V8c0-4 2.500-6.500 6-6.500 3.300 0 5.500 2.500 5.500 6.500v4.500l1.500 3zM5.500 17h6c-.5 2-5.500 2-6 0z" fill="#1b1b1b" />
          <path d="M6.500 6.500h4l-4 5h4" stroke="#d8eef0" strokeWidth="1.400" /><path d="M13 1.500h3.500L13 5.500h3.500" stroke="#1b1b1b" strokeWidth="1.300" />
        </Svg>
      </div>
    </footer>
  );
}

export default function App() {
  return (
    <div className='flex h-[1080px] w-[1920px] flex-col overflow-hidden bg-[#efefef] font-["Noto_Sans",sans-serif]'>
      <TitleBar />
      <MenuBar />
      <ToolBar />
      <div className="flex h-[892px] shrink-0">
        <div className="flex w-[31px] shrink-0 flex-col items-start bg-gradient-to-r from-[#fbfbfb] to-[#eeeeee] pl-[9px] pt-[7px]">
          <Grip vertical />
          <Svg w={15} h={14} className="mt-[8px]"><path d="M7.500 0C11.500 0 15 2 15 5.300c0 2-1.300 3.700-3 4.700.2 1.500.5 2.800.5 3.800L8.500 11C3.500 11.200 0 8.500 0 5.500S3.500 0 7.500 0z" fill="#12a2f2" /></Svg>
        </div>
        <Navigator />
        <div className="flex w-[7px] shrink-0 items-center justify-center pt-[2px]"><Svg w={3} h={17}><path d="M.5 0v17" stroke="#bbb" strokeDasharray="1 2" /><path d="M2.500 1v17" stroke="#ccc" strokeDasharray="1 2" /></Svg></div>
        <Workspace />
      </div>
      <div className="flex h-[26px] shrink-0 items-center justify-end pr-px pt-[2px] text-[14px] text-black">
        <span className="text-[14.500px] tracking-[0.900px]">100%</span>
        <span className="ml-[28px] tracking-[0.450px]">00:00:01</span>
      </div>
      <TaskBar />
    </div>
  );
}
